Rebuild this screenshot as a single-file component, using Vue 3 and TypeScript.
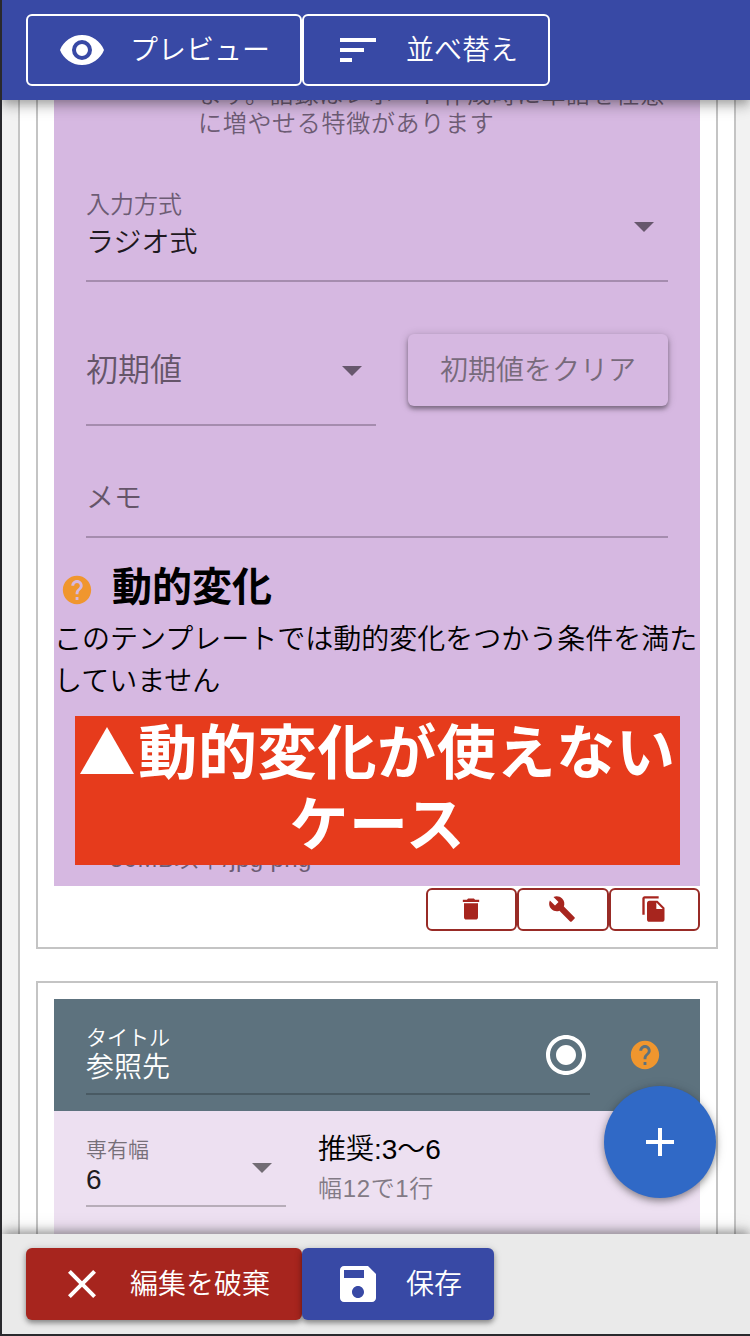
<script setup lang="ts">
const icons = {
  eye: 'M12 9a3 3 0 0 0-3 3 3 3 0 0 0 3 3 3 3 0 0 0 3-3 3 3 0 0 0-3-3m0 8a5 5 0 0 1-5-5 5 5 0 0 1 5-5 5 5 0 0 1 5 5 5 5 0 0 1-5 5m0-12.5C7 4.5 2.73 7.61 1 12c1.73 4.39 6 7.5 11 7.5s9.27-3.11 11-7.5c-1.73-4.39-6-7.5-11-7.5z',
  sort: 'M3 18h6v-2H3v2zM3 6v2h18V6H3zm0 7h12v-2H3v2z',
  help: 'M12 2C6.48 2 2 6.48 2 12s4.48 10 10 10 10-4.48 10-10S17.52 2 12 2zm1 17h-2v-2h2v2zm2.07-7.75l-.9.92C13.45 12.9 13 13.5 13 15h-2v-.5c0-1.1.45-2.1 1.17-2.83l1.24-1.26c.37-.36.59-.86.59-1.41 0-1.1-.9-2-2-2s-2 .9-2 2H8c0-2.21 1.79-4 4-4s4 1.79 4 4c0 .88-.36 1.68-.93 2.25z',
  trash: 'M6 19c0 1.1.9 2 2 2h8c1.1 0 2-.9 2-2V7H6v12zM19 4h-3.5l-1-1h-5l-1 1H5v2h14V4z',
  wrench: 'M22.7 19l-9.1-9.1c.9-2.3.4-5-1.5-6.9-2-2-5-2.4-7.4-1.3L9 6 6 9 1.6 4.7C.4 7.1.9 10.1 2.9 12.1c1.9 1.9 4.6 2.4 6.9 1.5l9.1 9.1c.4.4 1 .4 1.4 0l2.3-2.3c.5-.4.5-1.1.1-1.4z',
  copy: 'M16 1H4c-1.100 0-2 .9-2 2v14h2V3h12V1zm-1 4l6 6v10c0 1.100-.9 2-2 2H7.990C6.890 23 6 22.100 6 21l.010-14c0-1.100.890-2 1.990-2h7zm-1 7h5.500L14 6.500V12z',
  radio: 'M12 7c-2.760 0-5 2.240-5 5s2.240 5 5 5 5-2.240 5-5-2.240-5-5-5zm0-5C6.480 2 2 6.480 2 12s4.480 10 10 10 10-4.480 10-10S17.520 2 12 2zm0 18c-4.420 0-8-3.580-8-8s3.580-8 8-8 8 3.580 8 8-3.580 8-8 8z',
  plus: 'M19 13h-6v6h-2v-6H5v-2h6V5h2v6h6v2z',
  close: 'M19 6.410L17.590 5 12 10.590 6.410 5 5 6.410 10.590 12 5 17.590 6.410 19 12 13.410 17.590 19 19 17.590 13.410 12z',
  save: 'M17 3H5c-1.110 0-2 .9-2 2v14c0 1.100.890 2 2 2h14c1.100 0 2-.9 2-2V7l-4-4zm-5 16c-1.660 0-3-1.340-3-3s1.340-3 3-3 3 1.340 3 3-1.340 3-3 3zm3-10H5V5h10v4z',
}
const tools = [
  { name: '削除', path: icons.trash },
  { name: '設定', path: icons.wrench },
  { name: '複製', path: icons.copy },
]
</script>

<template>
  <div class="app">
    <header class="bar top">
      <button class="btn outlined preview">
        <svg viewBox="0 0 24 24"><path :d="icons.eye" /></svg><span>プレビュー</span>
      </button>
      <button class="btn outlined sort">
        <svg viewBox="0 0 24 24"><path :d="icons.sort" /></svg><span>並べ替え</span>
      </button>
    </header>

    <main>
      <div class="sheet">
        <section class="card first">
          <div class="body purple">
            <p class="note">ます。語録はレポート作成時に単語を任意に増やせる特徴があります</p>
            <div class="field method">
              <div class="stack">
                <label>入力方式</label>
                <span class="value">ラジオ式</span>
              </div>
              <i class="caret"></i>
            </div>
            <div class="row">
              <div class="field initial">
                <span class="placeholder">初期値</span>
                <i class="caret"></i>
              </div>
              <button class="clear">初期値をクリア</button>
            </div>
            <div class="field memo"><span>メモ</span></div>
            <div class="heading">
              <svg viewBox="0 0 24 24"><path :d="icons.help" /></svg>
              <h2>動的変化</h2>
            </div>
            <p class="message">このテンプレートでは動的変化をつかう条件を満たしていません</p>
            <div class="upload">
              <span class="limit">50MB以下/jpg png</span>
              <div class="banner"><span class="tri"></span>動的変化が使えない<br />ケース</div>
            </div>
          </div>
          <div class="tools">
            <button v-for="t in tools" :key="t.name">
              <svg viewBox="0 0 24 24"><path :d="t.path" /></svg>
            </button>
          </div>
        </section>

        <section class="card second">
          <div class="title">
            <div class="title-field">
              <div class="stack">
                <label>タイトル</label>
                <span class="value">参照先</span>
              </div>
              <svg viewBox="0 0 24 24"><path :d="icons.radio" /></svg>
            </div>
            <svg class="help" viewBox="0 0 24 24"><path :d="icons.help" /></svg>
          </div>
          <div class="body light">
            <div class="field width">
              <div class="stack">
                <label>専有幅</label>
                <span class="value">6</span>
              </div>
              <i class="caret"></i>
            </div>
            <div class="advice">
              <span class="rec">推奨:3〜6</span>
              <span class="hint">幅12で1行</span>
            </div>
          </div>
        </section>
      </div>
    </main>

    <button class="fab"><svg viewBox="0 0 24 24"><path :d="icons.plus" /></svg></button>

    <footer class="bar bottom">
      <button class="btn discard">
        <svg viewBox="0 0 24 24"><path :d="icons.close" /></svg><span>編集を破棄</span>
      </button>
      <button class="btn save">
        <svg viewBox="0 0 24 24"><path :d="icons.save" /></svg><span>保存</span>
      </button>
    </footer>
  </div>
</template>

<style>
body { margin: 0; overflow: hidden; }
</style>

<style scoped>
* { box-sizing: border-box; }
.app {
  position: relative;
  width: 750px;
  height: 1336px;
  display: flex;
  flex-direction: column;
  border-left: 2px solid #29292d;
  border-bottom: 2px solid #29292d;
  background: #f2f2f2;
  overflow: hidden;
  font-family: "Liberation Sans", "Noto Sans CJK JP", sans-serif;
  font-weight: 350;
  font-size: 28px;
  color: #000;
}
p, h2 { margin: 0; }
button {
  margin: 0;
  padding: 0;
  border: 0;
  background: none;
  font: inherit;
  color: inherit;
}
svg { display: block; flex: none; fill: currentColor; }
.bar {
  position: relative;
  z-index: 2;
  flex: none;
  display: flex;
  align-items: flex-start;
  padding: 14px 24px 0;
}
.top {
  height: 100px;
  background: #3849a5;
  box-shadow: 0 4px 8px -2px rgba(0, 0, 0, .2), 0 8px 10px rgba(0, 0, 0, .14), 0 2px 20px rgba(0, 0, 0, .12);
}
.bottom {
  height: 100px;
  background: #eaeaea;
  box-shadow: 0 -4px 8px -2px rgba(0, 0, 0, .2), 0 -4px 10px rgba(0, 0, 0, .16), 0 -2px 20px rgba(0, 0, 0, .12);
}
.btn {
  height: 72px;
  display: flex;
  align-items: center;
  border-radius: 6px;
  color: #fff;
  white-space: nowrap;
  line-height: 40px;
}
.btn svg { width: 48px; height: 48px; }
.btn span { margin-left: 24px; padding-top: 1px; }
.outlined { border: 2px solid #fff; }
.preview { width: 276px; padding-left: 30px; }
.sort { width: 248px; padding-left: 30px; }
.discard {
  width: 276px;
  padding-left: 32px;
  background: #a7251e;
  box-shadow: 0 3px 5px rgba(0, 0, 0, .35), 0 1px 8px rgba(0, 0, 0, .15);
}
.save {
  width: 192px;
  padding-left: 32px;
  background: #3849a5;
  box-shadow: 0 3px 5px rgba(0, 0, 0, .35), 0 1px 8px rgba(0, 0, 0, .15);
}

main { height: 1134px; overflow: hidden; padding: 0 14px 0 16px; }
.sheet {
  width: 718px;
  height: 1134px;
  padding: 0 16px;
  border: solid #c4c4c4;
  border-width: 0 2px;
  background: #fff;
}
.card { width: 682px; border: 2px solid #c4c4c4; padding: 16px; }
.first { height: 849px; border-top: 0; padding-top: 0; }
.second { height: 300px; margin-top: 32px; }
.purple { height: 786px; background: #d6b8e1; overflow: hidden; }
.note {
  width: 475px;
  margin: -20px 0 0 144px;
  font-size: 24px;
  letter-spacing: .7px;
  line-height: 29px;
  height: 58px;
  color: #6d5c74;
}
.field {
  display: flex;
  justify-content: space-between;
  border-bottom: 2px solid #a58cae;
}
.stack { display: flex; flex-direction: column; }
.caret {
  border: 10px solid transparent;
  border-top-color: #67576d;
  border-bottom: 0;
  height: 0;
}
.method { width: 582px; height: 93px; margin: 51px 0 0 32px; }
.method label { font-size: 24px; line-height: 28px; color: #6d5c74; padding-top: 2px; }
.method .value { line-height: 48px; color: #1e1820; }
.method .caret { margin: 33px 14px 0 0; }
.row { display: flex; justify-content: space-between; margin: 52px 32px 0; height: 92px; }
.initial { width: 290px; }
.placeholder { font-size: 32px; line-height: 73px; color: #655569; }
.initial .caret { margin: 32px 14px 0 0; }
.clear {
  width: 260px;
  height: 72px;
  padding-bottom: 5px;
  border-radius: 6px;
  color: #776a7b;
  background: #d6b8e1;
  box-shadow: 0 3px 4px rgba(0, 0, 0, .35), 0 1px 10px rgba(0, 0, 0, .18);
}
.memo { width: 582px; height: 72px; margin: 40px 0 0 32px; color: #655569; line-height: 65px; }
.heading { display: flex; align-items: center; height: 76px; padding-left: 6px; }
.heading svg { width: 34px; height: 34px; margin-top: 28px; color: #f0962e; }
.heading h2 { font-size: 40px; font-weight: 700; line-height: 60px; margin: 21px 0 0 18px; }
.message { line-height: 42px; word-break: break-all; height: 84px; margin-top: 5px; }
.upload { position: relative; height: 183px; }
.limit {
  position: absolute;
  left: 56px;
  bottom: 12px;
  font-size: 24px;
  line-height: 30px;
  letter-spacing: .4px;
  color: #6d5c74;
}
.banner {
  position: absolute;
  left: 21px;
  top: 13px;
  width: 605px;
  height: 149px;
  padding-top: 2px;
  background: #e63b1c;
  color: #fff;
  font-size: 59px;
  letter-spacing: .7px;
  font-weight: 700;
  line-height: 72px;
  text-align: center;
  white-space: nowrap;
}
.tri {
  display: inline-block;
  border: 27px solid transparent;
  border-bottom: 47px solid #fff;
  border-top: 0;
  margin: 0 4px 0 1px;
}
.tools { display: flex; justify-content: flex-end; padding-top: 2px; }
.tools button {
  display: flex;
  align-items: center;
  justify-content: center;
  width: 91.4px;
  height: 43px;
  padding: 0 1px 1px 0;
  border: 2px solid #982b26;
  border-radius: 6px;
  color: #a7251e;
}
.tools svg { width: 28px; height: 28px; }

.title { display: flex; height: 112px; padding-left: 32px; background: #5d727e; color: #fff; }
.title-field {
  display: flex;
  justify-content: space-between;
  width: 504px;
  height: 96px;
  padding-top: 26px;
  border-bottom: 2px solid #495a63;
}
.title label { font-size: 21px; line-height: 26px; }
.title .value { line-height: 34px; }
.title-field svg { width: 48px; height: 48px; margin-top: 6px; }
.help { width: 34px; height: 34px; margin: 39px 0 0 38px; color: #f0962e; }
.light { display: flex; height: 160px; padding-left: 32px; background: #ede0f1; }
.width { width: 200px; height: 96px; padding-top: 26px; border-color: #b7adb9; }
.width label { font-size: 21px; line-height: 26px; color: #766f78; }
.width .value { line-height: 33px; color: #1e1c1f; }
.width .caret { margin: 26px 14px 0 0; border-top-color: #726c74; }
.advice { display: flex; flex-direction: column; margin-left: 32px; padding-top: 19px; }
.rec { line-height: 40px; }
.hint { font-size: 24px; line-height: 38px; letter-spacing: .65px; color: #827a85; }
.fab {
  position: absolute;
  z-index: 3;
  left: 602px;
  top: 1086px;
  width: 112px;
  height: 112px;
  border-radius: 50%;
  display: flex;
  align-items: center;
  justify-content: center;
  background: #3069c6;
  color: #fff;
  box-shadow: 0 3px 6px rgba(0, 0, 0, .3), 0 2px 12px rgba(0, 0, 0, .18);
}
.fab svg { width: 48px; height: 48px; }
</style>
